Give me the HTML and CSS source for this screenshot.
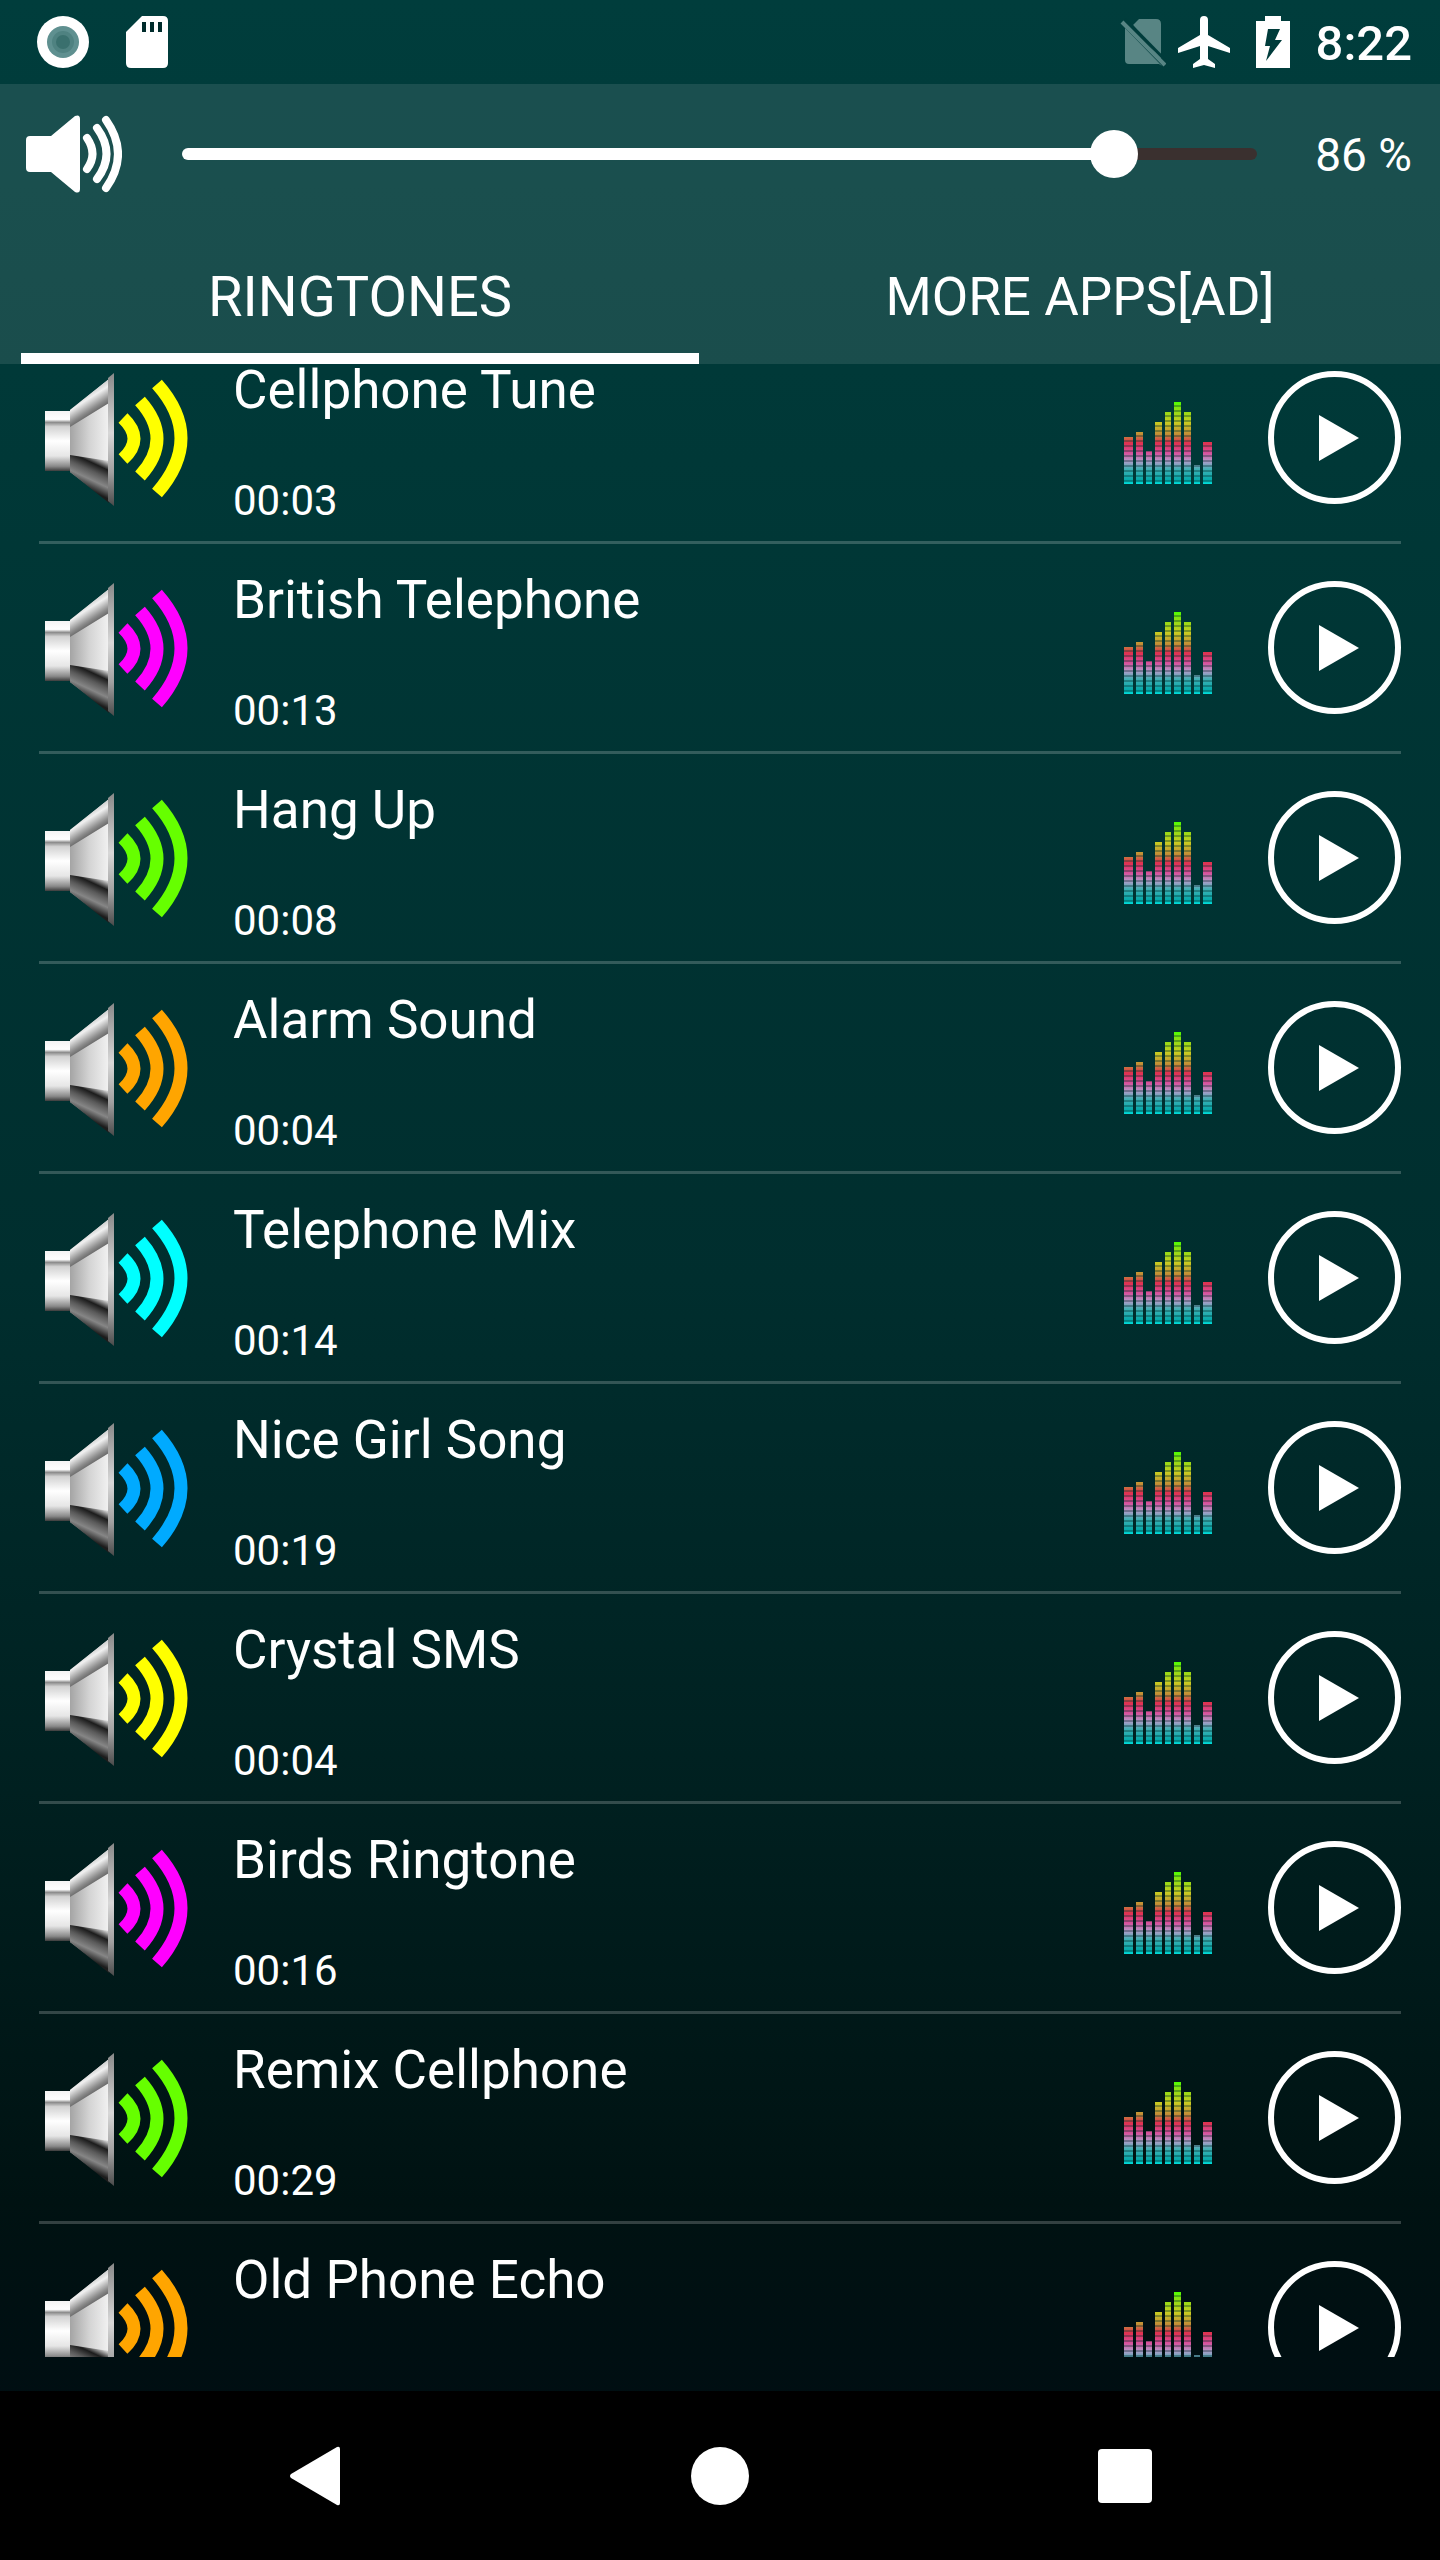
FILE: index.html
```html
<!DOCTYPE html>
<html lang="en">
<head>
  <meta charset="UTF-8">
  <meta name="viewport" content="width=device-width, initial-scale=1.0">
  <title>Ringtones</title>
  <link rel="stylesheet" href="styles.css">
</head>
<body>
  <!-- Shared icons -->
  <svg class="sprite" aria-hidden="true">
    <defs>
      <linearGradient id="metalBox" x1="0" y1="0" x2="0" y2="1">
        <stop offset="0" stop-color="#f4f4f4"/>
        <stop offset="0.14" stop-color="#ffffff"/>
        <stop offset="0.19" stop-color="#8c8c8c"/>
        <stop offset="0.26" stop-color="#d2d2d2"/>
        <stop offset="0.5" stop-color="#ffffff"/>
        <stop offset="0.75" stop-color="#e6e6e6"/>
        <stop offset="0.92" stop-color="#8a8a8a"/>
        <stop offset="1" stop-color="#3c3c3c"/>
      </linearGradient>
      <linearGradient id="metalCone" x1="0" y1="0" x2="1" y2="0">
        <stop offset="0" stop-color="#a4a4a4"/>
        <stop offset="0.5" stop-color="#d4d4d4"/>
        <stop offset="1" stop-color="#f2f2f2"/>
      </linearGradient>
      <linearGradient id="coneTop" gradientUnits="userSpaceOnUse" x1="38" y1="20" x2="52" y2="42">
        <stop offset="0" stop-color="#c0c0c0"/>
        <stop offset="0.3" stop-color="#f0f0f0"/>
        <stop offset="0.7" stop-color="#8a8a8a"/>
        <stop offset="0.85" stop-color="#6c6c6c"/>
        <stop offset="1" stop-color="#c8c8c8"/>
      </linearGradient>
      <linearGradient id="coneBottom" gradientUnits="userSpaceOnUse" x1="52" y1="84" x2="38" y2="114">
        <stop offset="0" stop-color="#c8c8c8"/>
        <stop offset="0.22" stop-color="#1c1c1c"/>
        <stop offset="0.45" stop-color="#5a5a5a"/>
        <stop offset="0.7" stop-color="#868686"/>
        <stop offset="1" stop-color="#1c1c1c"/>
      </linearGradient>
      <linearGradient id="rim" x1="0" y1="0" x2="0" y2="1">
        <stop offset="0" stop-color="#8a8a8a"/>
        <stop offset="0.45" stop-color="#d8d8d8"/>
        <stop offset="0.75" stop-color="#a0a0a0"/>
        <stop offset="1" stop-color="#4a4a4a"/>
      </linearGradient>
      <linearGradient id="spectrum" gradientUnits="userSpaceOnUse" x1="0" y1="0" x2="0" y2="82">
        <stop offset="0" stop-color="#4dff00"/>
        <stop offset="0.08" stop-color="#86e010"/>
        <stop offset="0.25" stop-color="#c8cc20"/>
        <stop offset="0.4" stop-color="#c48a38"/>
        <stop offset="0.5" stop-color="#e03050"/>
        <stop offset="0.62" stop-color="#d8509c"/>
        <stop offset="0.72" stop-color="#b49ac8"/>
        <stop offset="0.82" stop-color="#3fb0b4"/>
        <stop offset="0.95" stop-color="#06a9aa"/>
        <stop offset="1" stop-color="#00e0dc"/>
      </linearGradient>
      <pattern id="gaps" width="10" height="5" patternUnits="userSpaceOnUse">
        <rect y="3" width="10" height="2" fill="#002c2c" fill-opacity="0.35"/>
      </pattern>
    </defs>

    <symbol id="icon-speaker" viewBox="0 0 146 136">
      <path d="M0 38h25v60H0z" fill="url(#metalBox)"/>
      <path d="M25 37 64 6v122L25 99z" fill="url(#metalCone)"/>
      <path d="M25 37 64 6v24L25 54z" fill="url(#coneTop)"/>
      <path d="M25 82 64 88v42L25 99z" fill="url(#coneBottom)"/>
      <path d="M63 5 69 0v133l-6-5z" fill="url(#rim)"/>
      <g fill="none" stroke="currentColor" stroke-width="13">
        <path d="M78 45q22 21 0 41"/>
        <path d="M95 28q34 38 0 75"/>
        <path d="M112 11q48 54 0 109"/>
      </g>
    </symbol>

    <symbol id="icon-equalizer" viewBox="0 0 88 82">
      <path d="M0 35h9v47H0zM12 30h7v52h-7zM22 49h6v33h-6zM31 20h7v62h-7zM41 10h6v72h-6zM50 0h7v82h-7zM60 10h7v72h-7zM70 63h6v19h-6zM79 40h9v42h-9z" fill="url(#spectrum)"/>
      <path d="M0 35h9v47H0zM12 30h7v52h-7zM22 49h6v33h-6zM31 20h7v62h-7zM41 10h6v72h-6zM50 0h7v82h-7zM60 10h7v72h-7zM70 63h6v19h-6zM79 40h9v42h-9z" fill="url(#gaps)"/>
    </symbol>

    <symbol id="icon-play" viewBox="0 0 42 46">
      <path d="M1 0 41 23 1 46z" fill="currentColor"/>
    </symbol>
  </svg>

  <div class="app">
    <div class="status-bar">
      <div class="status-left">
        <svg class="status-icon" viewBox="0 0 52 52">
          <circle cx="26" cy="26" r="26" fill="#fff"/>
          <circle cx="26" cy="26" r="16" fill="#5f9090"/>
          <circle cx="26" cy="26" r="11" fill="#4f8281"/>
          <circle cx="26" cy="26" r="7" fill="#3a706e"/>
        </svg>
        <svg class="status-card" viewBox="0 0 42 52">
          <path d="M16 0h21q5 0 5 5v42q0 5-5 5H5q-5 0-5-5V16z" fill="#fff"/>
          <path d="M16 6h4v10h-4zM24 6h4v10h-4zM32 6h4v10h-4z" fill="#002c2c"/>
        </svg>
      </div>
      <div class="status-right">
        <svg class="status-sim" viewBox="0 0 46 52">
          <path d="M13 9 19 3h17q5 0 5 5v36zM6 13l36 37-3-2H9q-4 0-4-4V12z" fill="#588584"/>
          <path d="m5 3 41 42" stroke="#003c3b" stroke-width="3"/>
          <path d="m2 6 43 43" stroke="#588584" stroke-width="4"/>
        </svg>
        <svg class="status-icon" viewBox="0 0 52 52">
          <path d="M22 4q0-4 4-4t4 4v15l22 13v5l-22-7v13l7 5v4l-11-3-11 3v-4l7-5V30L0 37v-5l22-13z" fill="#fff"/>
        </svg>
        <svg class="status-battery" viewBox="0 0 34 52">
          <path d="M9 0h16v5h9v47H0V5h9z" fill="#fff"/>
          <path d="M12 13h12l-5 11h7L10 45l4-15H9z" fill="#003c3b"/>
        </svg>
        <span class="clock">8:22</span>
      </div>
    </div>

    <header class="header">
      <div class="volume">
        <svg class="volume-icon" viewBox="0 0 96 78">
          <path d="M4 21h21L49 1q5-2 5 3v70q0 5-5 3L25 57H4q-4 0-4-4V25q0-4 4-4z" fill="#fff"/>
          <g fill="none" stroke="#fff" stroke-width="8" stroke-linecap="round">
            <path d="M61 23q11 16 0 31"/>
            <path d="M71 13q19 26 0 51"/>
            <path d="M80 5q24 34 0 68"/>
          </g>
        </svg>
        <div class="slider">
          <input type="range" id="volume" min="0" max="15" value="13" aria-label="Volume">
        </div>
        <label class="volume-value" for="volume">86 %</label>
      </div>
      <nav class="tabs">
        <button class="tab active">RINGTONES</button>
        <button class="tab">MORE APPS[AD]</button>
      </nav>
    </header>

    <main class="content">
      <ul class="ringtones">
        <li class="ringtone">
          <svg class="speaker yellow"><use href="#icon-speaker"/></svg>
          <div class="info">
            <h3>Cellphone Tune</h3>
            <p>00:03</p>
          </div>
          <svg class="equalizer"><use href="#icon-equalizer"/></svg>
          <button class="play" aria-label="Play"><svg><use href="#icon-play"/></svg></button>
        </li>
        <li class="ringtone">
          <svg class="speaker magenta"><use href="#icon-speaker"/></svg>
          <div class="info">
            <h3>British Telephone</h3>
            <p>00:13</p>
          </div>
          <svg class="equalizer"><use href="#icon-equalizer"/></svg>
          <button class="play" aria-label="Play"><svg><use href="#icon-play"/></svg></button>
        </li>
        <li class="ringtone">
          <svg class="speaker green"><use href="#icon-speaker"/></svg>
          <div class="info">
            <h3>Hang Up</h3>
            <p>00:08</p>
          </div>
          <svg class="equalizer"><use href="#icon-equalizer"/></svg>
          <button class="play" aria-label="Play"><svg><use href="#icon-play"/></svg></button>
        </li>
        <li class="ringtone">
          <svg class="speaker orange"><use href="#icon-speaker"/></svg>
          <div class="info">
            <h3>Alarm Sound</h3>
            <p>00:04</p>
          </div>
          <svg class="equalizer"><use href="#icon-equalizer"/></svg>
          <button class="play" aria-label="Play"><svg><use href="#icon-play"/></svg></button>
        </li>
        <li class="ringtone">
          <svg class="speaker cyan"><use href="#icon-speaker"/></svg>
          <div class="info">
            <h3>Telephone Mix</h3>
            <p>00:14</p>
          </div>
          <svg class="equalizer"><use href="#icon-equalizer"/></svg>
          <button class="play" aria-label="Play"><svg><use href="#icon-play"/></svg></button>
        </li>
        <li class="ringtone">
          <svg class="speaker blue"><use href="#icon-speaker"/></svg>
          <div class="info">
            <h3>Nice Girl Song</h3>
            <p>00:19</p>
          </div>
          <svg class="equalizer"><use href="#icon-equalizer"/></svg>
          <button class="play" aria-label="Play"><svg><use href="#icon-play"/></svg></button>
        </li>
        <li class="ringtone">
          <svg class="speaker yellow"><use href="#icon-speaker"/></svg>
          <div class="info">
            <h3>Crystal SMS</h3>
            <p>00:04</p>
          </div>
          <svg class="equalizer"><use href="#icon-equalizer"/></svg>
          <button class="play" aria-label="Play"><svg><use href="#icon-play"/></svg></button>
        </li>
        <li class="ringtone">
          <svg class="speaker magenta"><use href="#icon-speaker"/></svg>
          <div class="info">
            <h3>Birds Ringtone</h3>
            <p>00:16</p>
          </div>
          <svg class="equalizer"><use href="#icon-equalizer"/></svg>
          <button class="play" aria-label="Play"><svg><use href="#icon-play"/></svg></button>
        </li>
        <li class="ringtone">
          <svg class="speaker green"><use href="#icon-speaker"/></svg>
          <div class="info">
            <h3>Remix Cellphone</h3>
            <p>00:29</p>
          </div>
          <svg class="equalizer"><use href="#icon-equalizer"/></svg>
          <button class="play" aria-label="Play"><svg><use href="#icon-play"/></svg></button>
        </li>
        <li class="ringtone">
          <svg class="speaker orange"><use href="#icon-speaker"/></svg>
          <div class="info">
            <h3>Old Phone Echo</h3>
          </div>
          <svg class="equalizer"><use href="#icon-equalizer"/></svg>
          <button class="play" aria-label="Play"><svg><use href="#icon-play"/></svg></button>
        </li>
      </ul>
    </main>

    <footer class="nav-bar">
      <button aria-label="Back">
        <svg viewBox="0 0 60 60"><path d="M52 1q3-1 3 2v54q0 3-3 2L6 32q-2-2 0-4z" fill="#fff"/></svg>
      </button>
      <button aria-label="Home">
        <svg viewBox="0 0 60 60"><circle cx="30" cy="30" r="29" fill="#fff"/></svg>
      </button>
      <button aria-label="Recent apps">
        <svg viewBox="0 0 60 60"><rect x="3" y="3" width="54" height="54" rx="4" fill="#fff"/></svg>
      </button>
    </footer>
  </div>

  <script>
    // Fill the track up to the thumb
    const volume = document.getElementById("volume");
    const volumeValue = document.querySelector(".volume-value");
    volume.addEventListener("input", () => {
      const percent = (volume.value / volume.max) * 100;
      volume.parentElement.style.setProperty("--level", percent + "%");
      volumeValue.textContent = `${Math.floor(percent)} %`;
    });
  </script>
</body>
</html>
```

FILE: styles.css
```css
* {
  box-sizing: border-box;
  margin: 0;
  padding: 0;
  font-family: Roboto, sans-serif;
}

body {
  background-color: #000;
  color: #fff;
}

button {
  background: none;
  border: none;
  color: inherit;
  cursor: pointer;
}

svg {
  display: block;
}

.sprite {
  position: absolute;
  width: 0;
  height: 0;
}

.app {
  display: flex;
  flex-direction: column;
  height: 100vh;
  background: linear-gradient(#003d3c 0%, #003837 18%, #002e2e 50%, #002020 70%, #001212 86%, #000e12 94%);
}

/* Status bar */
.status-bar {
  display: flex;
  justify-content: space-between;
  align-items: center;
  height: 84px;
  padding: 0 28px 0 37px;
}

.status-left {
  display: flex;
  gap: 37px;
}

.status-right {
  display: flex;
  align-items: center;
  gap: 26px;
}

.status-icon {
  width: 52px;
  height: 52px;
}

.status-card {
  width: 42px;
  height: 52px;
}

.status-sim {
  width: 46px;
  height: 52px;
  margin-right: -14px;
}

.status-battery {
  width: 34px;
  height: 52px;
}

.clock {
  padding-top: 4px;
  font-size: 49px;
  font-weight: 500;
  line-height: 52px;
}

/* Volume and tabs */
.header {
  background-color: rgba(255, 255, 255, 0.1);
}

.volume {
  display: flex;
  align-items: center;
  height: 140px;
  padding: 0 28px 0 26px;
}

.volume-icon {
  width: 96px;
  height: 78px;
}

.slider {
  --level: 86.67%;
  flex: 1;
  display: flex;
  align-items: center;
  height: 12px;
  margin: 0 58px 0 60px;
  border-radius: 6px;
  background: linear-gradient(to right, #fff var(--level), #3a302f var(--level));
}

.slider input {
  flex: 1;
  height: 48px;
  margin: 0 -24px;
  background: none;
  appearance: none;
  cursor: pointer;
}

.slider input::-webkit-slider-thumb {
  appearance: none;
  width: 48px;
  height: 48px;
  border-radius: 50%;
  background-color: #fff;
}

.volume-value {
  padding-top: 2px;
  font-size: 46px;
  line-height: 56px;
}

.tabs {
  display: flex;
}

.tab {
  flex: 1;
  height: 140px;
  margin: 0 21px;
  padding-top: 16px;
  border-bottom: 11px solid transparent;
  font-size: 53px;
  line-height: 64px;
}

.tab.active {
  border-bottom-color: #fff;
  font-size: 56px;
}

/* Ringtone list */
.content {
  flex: 1;
  min-height: 0;
  margin-bottom: 34px;
  overflow-y: auto;
  scrollbar-width: none;
}

.ringtones {
  margin: -30px 39px 0;
  list-style: none;
}

.ringtone {
  display: flex;
  align-items: center;
  height: 210px;
  padding-left: 6px;
  border-bottom: 3px solid rgba(255, 255, 255, 0.2);
}

.speaker {
  width: 146px;
  height: 136px;
  margin-top: 6px;
}

.yellow {
  color: #ffff00;
}

.magenta {
  color: #ff00ff;
}

.green {
  color: #66ff00;
}

.orange {
  color: #ffa500;
}

.cyan {
  color: #00ffff;
}

.blue {
  color: #00aaff;
}

.info {
  flex: 1;
  align-self: flex-start;
  display: flex;
  flex-direction: column;
  gap: 60px;
  padding: 30px 0 0 42px;
}

.info h3 {
  font-size: 53px;
  font-weight: 400;
  line-height: 52px;
}

.info p {
  font-size: 42px;
  line-height: 50px;
}

.equalizer {
  width: 88px;
  height: 82px;
  margin: 10px 56px 0 0;
}

.play {
  display: flex;
  justify-content: center;
  align-items: center;
  width: 133px;
  height: 133px;
  padding-left: 8px;
  border: 6px solid #fff;
  border-radius: 50%;
}

.play svg {
  width: 42px;
  height: 46px;
}

/* Android navigation */
.nav-bar {
  display: flex;
  justify-content: center;
  align-items: center;
  gap: 309px;
  height: 169px;
  background-color: #000;
}

.nav-bar button {
  padding: 18px;
}

.nav-bar svg {
  width: 60px;
  height: 60px;
}
```
